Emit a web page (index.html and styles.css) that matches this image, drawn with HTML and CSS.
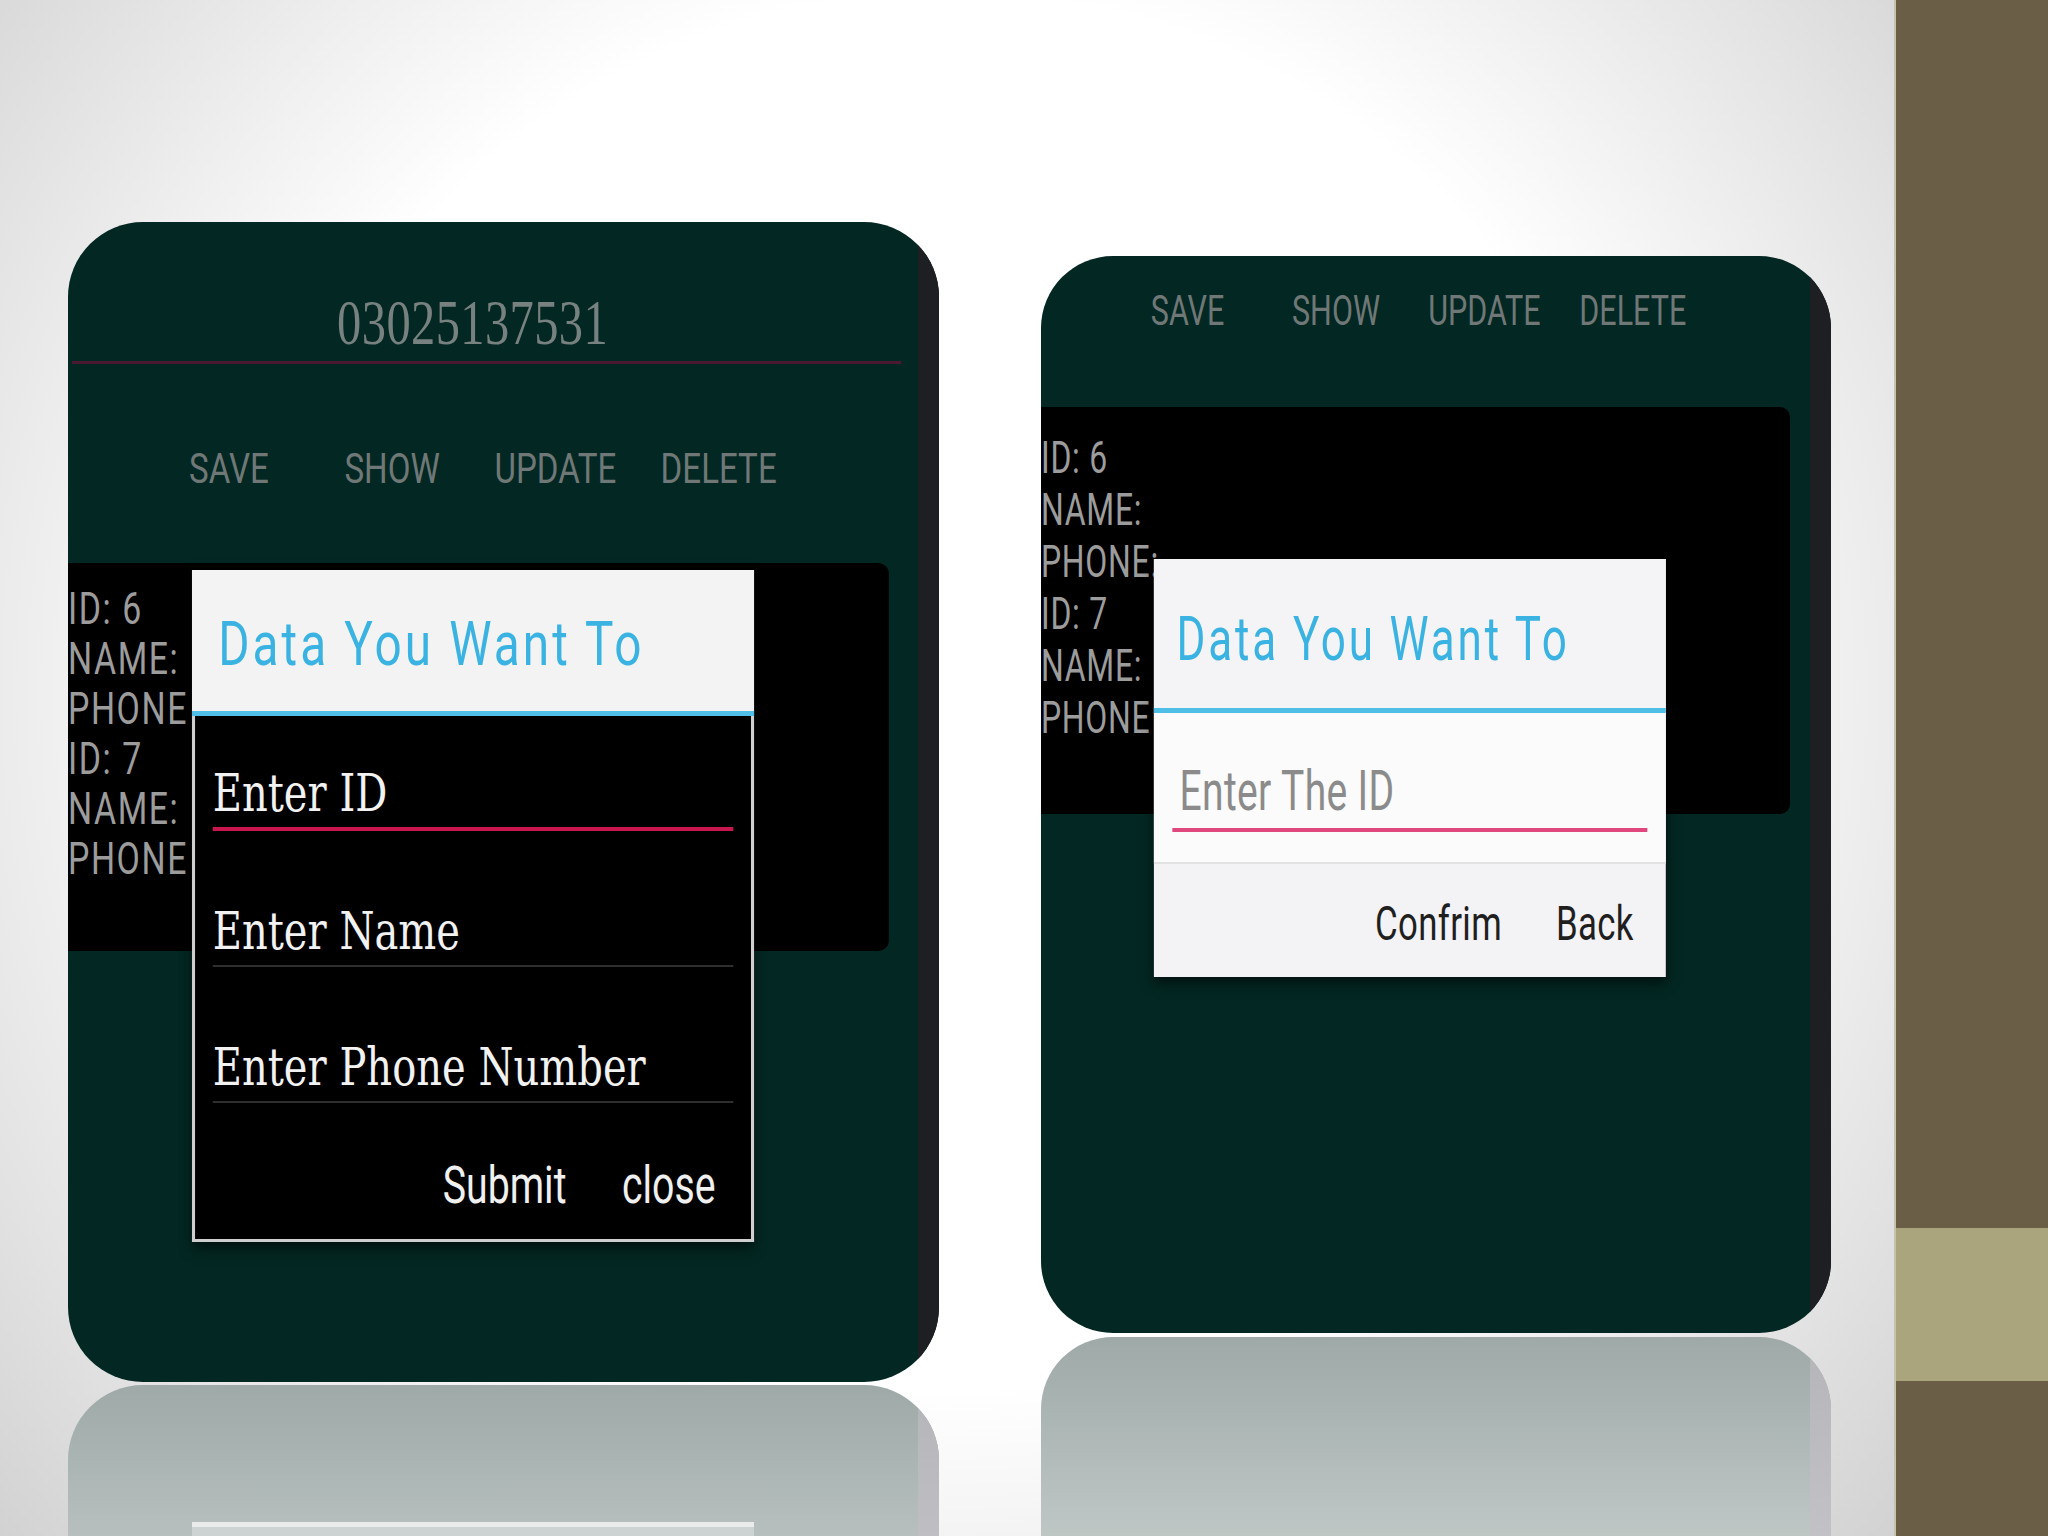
FILE: index.html
```html
<!DOCTYPE html>
<html lang="en">
<head>
<meta charset="utf-8">
<title>Update and Delete dialogs</title>
<link rel="stylesheet" href="styles.css">
</head>
<body>
<div class="page">
  <main class="slide">
    <section class="device device-left">
      <div class="phone">
        <div class="screen">
          <div class="canvas">
            <div class="number-field">03025137531</div>
            <div class="actions">
              <span class="btn">SAVE</span>
              <span class="btn">SHOW</span>
              <span class="btn">UPDATE</span>
              <span class="btn">DELETE</span>
            </div>
            <div class="records">
              <p>ID: 6</p>
              <p>NAME:</p>
              <p>PHONE</p>
              <p>ID: 7</p>
              <p>NAME:</p>
              <p>PHONE</p>
            </div>
            <div class="dialog dialog-dark">
              <div class="dialog-head"><h2 class="dialog-title">Data You Want To</h2></div>
              <div class="dialog-body">
                <div class="field active">Enter ID</div>
                <div class="field">Enter Name</div>
                <div class="field">Enter Phone Number</div>
                <div class="dialog-actions"><span>Submit</span><span>close</span></div>
              </div>
            </div>
          </div>
        </div>
        <div class="edge"></div>
      </div>
      <div class="reflection">
        <div class="reflection-screen"><div class="ghost"></div></div>
        <div class="reflection-edge"></div>
      </div>
    </section>

    <section class="device device-right">
      <div class="phone">
        <div class="screen">
          <div class="canvas">
            <div class="actions">
              <span class="btn">SAVE</span>
              <span class="btn">SHOW</span>
              <span class="btn">UPDATE</span>
              <span class="btn">DELETE</span>
            </div>
            <div class="records">
              <p>ID: 6</p>
              <p>NAME:</p>
              <p>PHONE:</p>
              <p>ID: 7</p>
              <p>NAME:</p>
              <p>PHONE</p>
            </div>
            <div class="dialog dialog-light">
              <div class="dialog-head"><h2 class="dialog-title">Data You Want To</h2></div>
              <div class="dialog-input">
                <div class="field-light">Enter The ID</div>
              </div>
              <div class="dialog-actions"><span>Confrim</span><span>Back</span></div>
            </div>
          </div>
        </div>
        <div class="edge"></div>
      </div>
      <div class="reflection">
        <div class="reflection-screen"></div>
        <div class="reflection-edge"></div>
      </div>
    </section>
  </main>
  <aside class="panel">
    <div class="panel-top"></div>
    <div class="panel-band"></div>
    <div class="panel-bottom"></div>
  </aside>
</div>
</body>
</html>
```

FILE: styles.css
```css
* { box-sizing: border-box; margin: 0; padding: 0; }
html, body { width: 2048px; height: 1536px; overflow: hidden; }
body { font-family: Roboto, "Liberation Sans", sans-serif; background: #fff; }

.page { display: flex; width: 2048px; height: 1536px; }

.slide {
  width: 1894px;
  height: 1536px;
  overflow: hidden;
  display: flex;
  align-items: flex-start;
  gap: 102px;
  padding: 222px 0 0 68px;
  background: radial-gradient(circle farthest-corner at 50% 45%, #ffffff 55%, #d2d2d2 100%);
}

.device { display: flex; flex-direction: column; flex-shrink: 0; }
.device-left { width: 871px; }
.device-right { width: 790px; margin-top: 34px; }

.phone { display: flex; background: #032722; border-radius: 75px; overflow: hidden; }
.device-left .phone { height: 1160px; }
.device-right .phone { height: 1077px; border-radius: 72px; }

.screen { flex: 1; min-width: 0; overflow: hidden; }
.edge { width: 21px; background: #1d1f22; }

.canvas { position: relative; display: flow-root; height: 100%; transform-origin: 0 0; }
.device-left .canvas { width: 1104px; transform: scaleX(0.77); }
.device-right .canvas { width: 1083px; transform: scaleX(0.71); }

/* phone number field */
.number-field {
  margin: 0 22px 0 5px;
  padding: 65px 36px 2px 0;
  border-bottom: 3px solid #4a1830;
  font: 63px/72px "Liberation Serif", serif;
  letter-spacing: 0.5px;
  color: #77817f;
  text-align: center;
}

/* top buttons */
.actions { display: flex; font-size: 43px; line-height: 50px; color: #6f7876; }
.btn { text-align: center; white-space: nowrap; }
.device-left .actions { margin-top: 79px; padding-left: 103px; }
.device-left .btn { width: 212px; }
.device-right .actions { margin-top: 29px; padding-left: 102px; }
.device-right .btn { width: 209px; }

/* records list */
.records { background: #000; color: #9c9c9c; white-space: nowrap; border-radius: 0 14px 14px 0 / 0 10px 10px 0; }
.device-left .records { margin-top: 70px; width: 1066px; height: 388px; padding-top: 21px; font-size: 44px; line-height: 50px; letter-spacing: 2px; }
.device-right .records { margin-top: 72px; width: 1055px; height: 407px; padding-top: 25px; font-size: 45px; line-height: 52px; letter-spacing: 1px; }

/* dialogs */
.dialog { position: absolute; box-shadow: 0 6px 14px rgba(0, 0, 0, 0.55); }
.dialog-head { background: #f3f3f3; border-bottom: 5px solid #4fbfe8; }
.dialog-title { font-size: 62px; line-height: 70px; font-weight: 400; letter-spacing: 4px; color: #3bb3e2; white-space: nowrap; }

.dialog-dark { left: 161px; top: 348px; width: 730px; height: 672px; }
.dialog-dark .dialog-head { height: 146px; padding: 39px 0 0 34px; }
.dialog-dark .dialog-body {
  display: flow-root;
  height: 526px;
  background: #000;
  border: 4px solid #cfcfcf;
  border-top: 0;
  border-bottom-width: 3px;
  padding: 0 23px;
}
.field {
  font: 52px/58px "DejaVu Serif", serif;
  color: #f2f2f2;
  white-space: nowrap;
  margin-top: 71px;
  padding-bottom: 5px;
  border-bottom: 2px solid #2e2e2e;
}
.field.active { margin-top: 48px; border-bottom: 4px solid #c8174f; }
.dialog-dark .dialog-actions {
  display: flex;
  justify-content: flex-end;
  gap: 72px;
  margin-top: 54px;
  padding-right: 23px;
  font-size: 51px;
  line-height: 57px;
  color: #f0f0f0;
}

.dialog-light { left: 159px; top: 303px; width: 721px; height: 418px; background: #f3f2f5; }
.dialog-light .dialog-head { height: 154px; padding: 45px 0 0 32px; background: #f4f4f6; }
.dialog-input { height: 149px; background: #fbfbfb; padding: 47px 26px 0; }
.field-light {
  font-size: 55px;
  line-height: 62px;
  letter-spacing: 0.5px;
  color: #8b8b8b;
  white-space: nowrap;
  padding: 0 0 6px 10px;
  border-bottom: 4px solid #e0487d;
}
.dialog-light .dialog-actions {
  display: flex;
  justify-content: flex-end;
  gap: 76px;
  height: 115px;
  padding: 32px 45px 0 0;
  border-top: 2px solid #e2e2e2;
  font-size: 49px;
  line-height: 55px;
  letter-spacing: 0.5px;
  color: #1f1f1f;
}

/* reflections */
.reflection {
  display: flex;
  height: 400px;
  border-radius: 75px 75px 0 0;
  overflow: hidden;
  background: linear-gradient(#9ea9a8, #c2cac8 55%, #d5dad9);
}
.device-left .reflection { margin-top: 3px; }
.device-right .reflection { margin-top: 4px; border-radius: 72px 72px 0 0; }
.reflection-screen { flex: 1; }
.reflection-edge { width: 21px; background: linear-gradient(#b4b4b9, #cfcfd3); }
.ghost { margin: 137px 0 0 124px; width: 562px; height: 60px; border-top: 5px solid #e9eceb; background: #cdd3d2; }

/* right decorative panel */
.panel { width: 154px; display: flex; flex-direction: column; border-left: 2px solid #c4c3ae; background: #6b5e47; }
.panel-top { height: 1228px; }
.panel-band { height: 153px; background: #aba57d; }
.panel-bottom { flex: 1; }
```
